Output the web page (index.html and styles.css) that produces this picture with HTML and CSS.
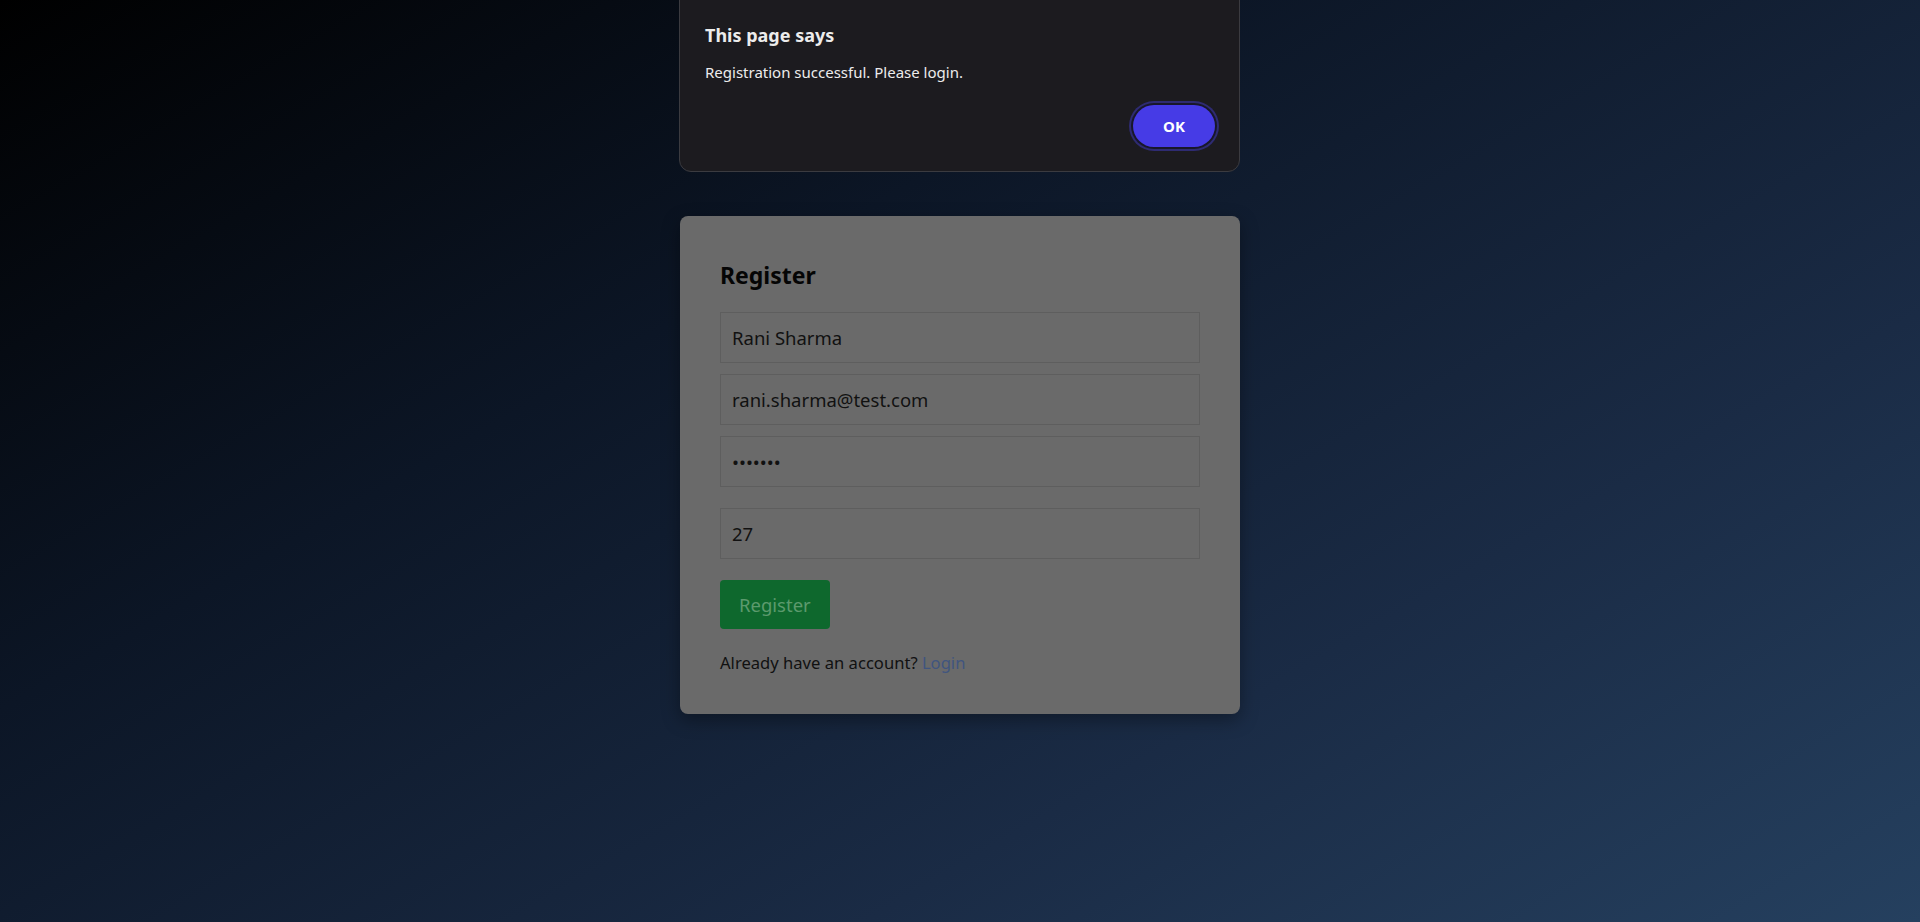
FILE: index.html
```html
<!DOCTYPE html>
<html lang="en">
<head>
<meta charset="utf-8">
<title>Register</title>
<link rel="stylesheet" href="styles.css">
</head>
<body>
<main class="page">
  <section class="card">
    <h2 class="card-title">Register</h2>
    <form class="form">
      <input class="field" type="text" value="Rani Sharma">
      <input class="field" type="email" value="rani.sharma@test.com">
      <input class="field" type="password" value="1234567">
      <div class="spacer"></div>
      <input class="field" type="text" value="27">
      <button class="btn-register" type="button">Register</button>
    </form>
    <p class="switch">Already have an account? <a class="link" href="#">Login</a></p>
  </section>
</main>
<div class="alert" role="alertdialog">
  <div class="alert-title">This page says</div>
  <div class="alert-msg">Registration successful. Please login.</div>
  <div class="alert-actions">
    <button class="alert-ok" type="button">OK</button>
  </div>
</div>
</body>
</html>
```
FILE: styles.css
```css
* { box-sizing: border-box; }
html, body { margin: 0; padding: 0; }
body {
  min-height: 922px;
  background: linear-gradient(150deg, #000000 0%, #0c1626 35%, #1a2b45 70%, #25405f 100%);
  font-family: "Noto Sans", "Open Sans", sans-serif;
  color: #111;
}
.page {
  display: flex;
  justify-content: center;
  padding-top: 216px;
}
.card {
  width: 560px;
  background: #6a6a6a;
  border-radius: 8px;
  padding: 40px 40px 39px;
  box-shadow: 0 6px 18px rgba(0,0,0,0.35);
}
.card-title {
  margin: 5px 0 22px;
  font-size: 23px;
  font-weight: 700;
  line-height: 29px;
  color: #050505;
}
.form { display: flex; flex-direction: column; }
.field {
  height: 51px;
  margin: 0 0 11px;
  padding: 0 11px;
  border: 1px solid #5e5e5e;
  background: #6a6a6a;
  font-family: inherit;
  font-size: 18.5px;
  color: #111;
  outline: none;
}
.spacer { height: 10px; }
.btn-register {
  align-self: flex-start;
  margin-top: 10px;
  height: 49px;
  padding: 0 19px;
  border: none;
  border-radius: 4px;
  background: #0e682d;
  color: #5c9a6d;
  font-family: inherit;
  font-size: 18.5px;
}
.switch {
  margin: 22px 0 0;
  font-size: 16.6px;
  line-height: 24px;
  color: #111;
}
.link { color: #40557f; text-decoration: none; }

.alert {
  position: absolute;
  left: 679px;
  top: -12px;
  width: 561px;
  height: 184px;
  padding: 34px 24px 0 25px;
  background: #1c1b1f;
  border: 1px solid #3b3b40;
  border-radius: 12px;
  font-family: "Noto Sans", "Open Sans", sans-serif;
  color: #ececec;
}
.alert-title {
  font-size: 18px;
  font-weight: 700;
  line-height: 24px;
}
.alert-msg {
  margin-top: 15px;
  font-size: 15px;
  line-height: 20px;
}
.alert-actions {
  display: flex;
  justify-content: flex-end;
  margin-top: 23px;
}
.alert-ok {
  width: 82px;
  height: 42px;
  border: none;
  border-radius: 21px;
  background: #463be6;
  color: #fff;
  font-family: inherit;
  font-size: 15px;
  font-weight: 700;
  box-shadow: 0 0 0 2px #18172a, 0 0 0 4px #2e2b72;
}
```
